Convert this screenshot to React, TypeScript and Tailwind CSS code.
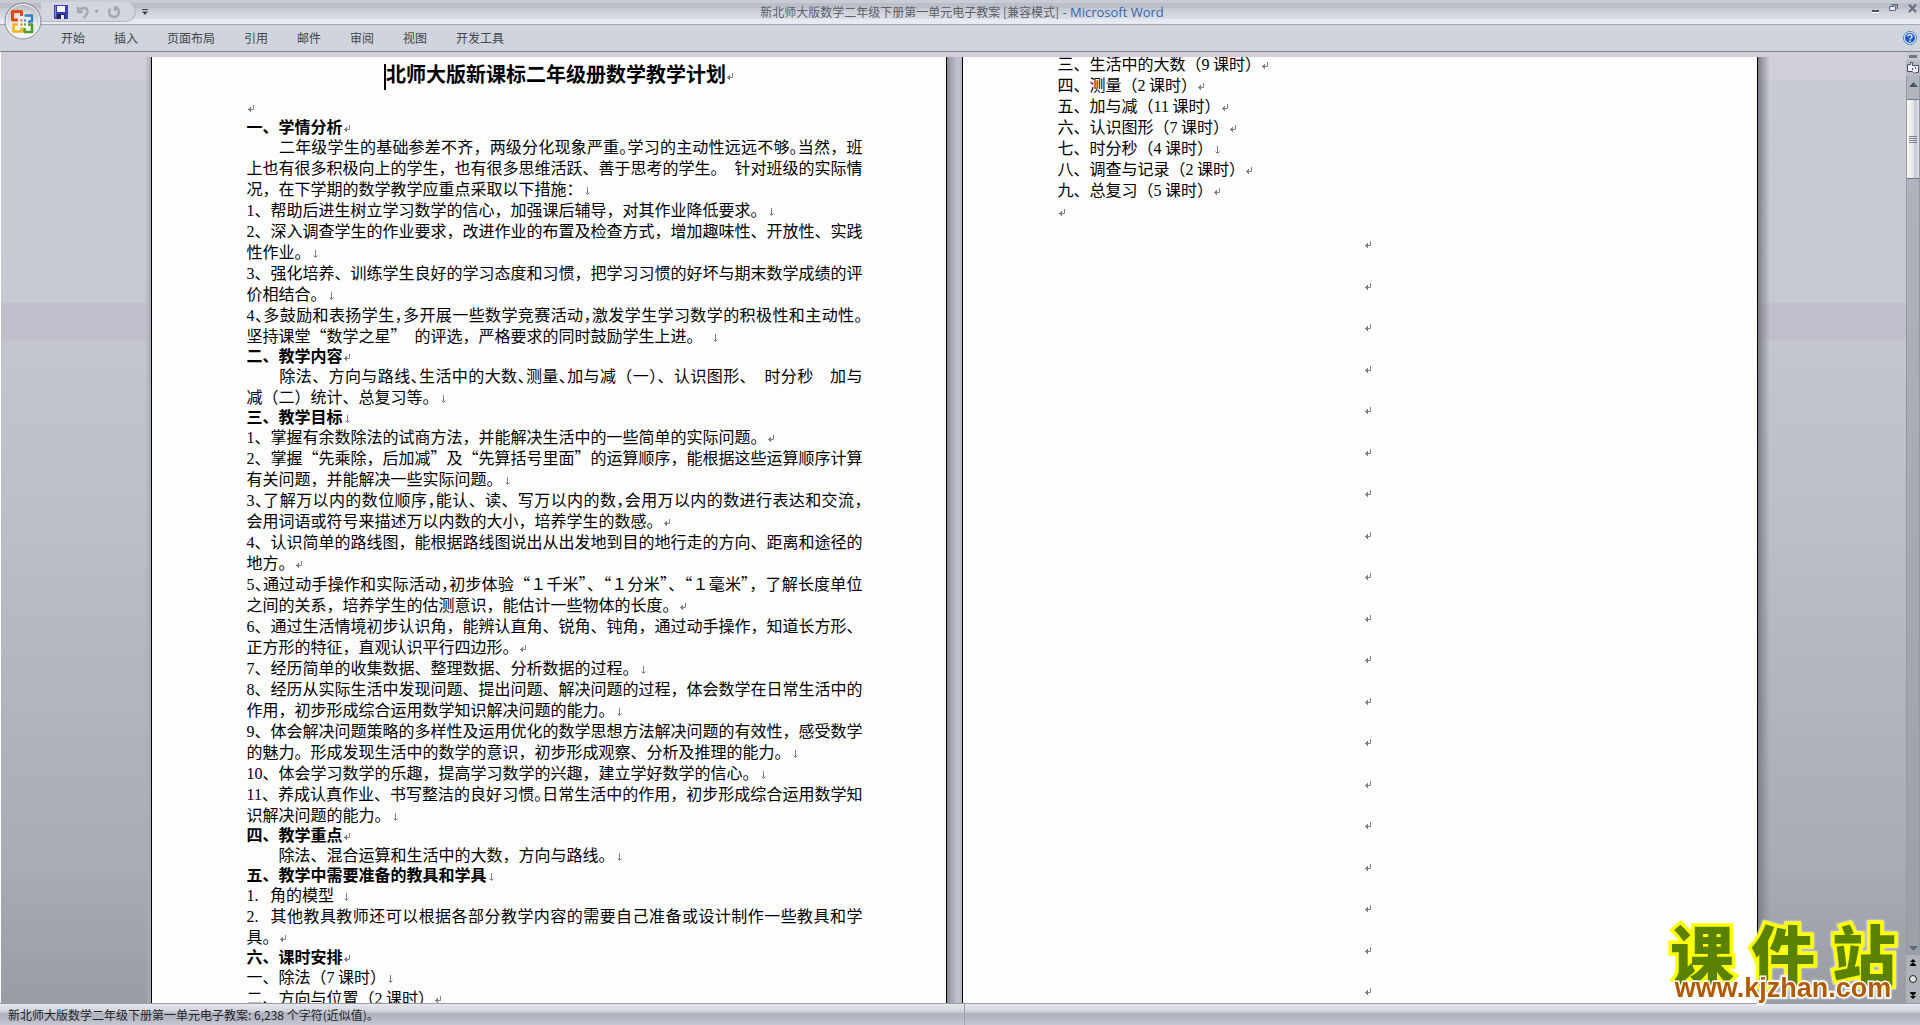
import { Fragment } from "react";

type Mark = "return" | "break";

interface Line {
  text: string;
  mark?: Mark;
  heading?: boolean;
  fill?: boolean;
}

const tabs = ["开始", "插入", "页面布局", "引用", "邮件", "审阅", "视图", "开发工具"];

// "^" before a punctuation mark sets it half width
const leftLines: Line[] = [
  { text: "一、学情分析", mark: "return", heading: true },
  { text: "　　二年级学生的基础参差不齐，两级分化现象严重^。学习的主动性远远不够^。当然，班", fill: true },
  { text: "上也有很多积极向上的学生，也有很多思维活跃、善于思考的学生。\u2002针对班级的实际情", fill: true },
  { text: "况，在下学期的数学教学应重点采取以下措施：", mark: "break" },
  { text: "1、帮助后进生树立学习数学的信心，加强课后辅导，对其作业降低要求。", mark: "break" },
  { text: "2、深入调查学生的作业要求，改进作业的布置及检查方式，增加趣味性、开放性、实践", fill: true },
  { text: "性作业。", mark: "break" },
  { text: "3、强化培养、训练学生良好的学习态度和习惯，把学习习惯的好坏与期末数学成绩的评", fill: true },
  { text: "价相结合。", mark: "break" },
  { text: "4^、多鼓励和表扬学生^，多开展一些数学竞赛活动^，激发学生学习数学的积极性和主动性^。", fill: true },
  { text: "坚持课堂“数学之星”\u2002的评选，严格要求的同时鼓励学生上进。\u2002", mark: "break" },
  { text: "二、教学内容", mark: "return", heading: true },
  { text: "　　除法、方向与路线^、生活中的大数^、测量^、加与减（一）、认识图形、\u2002时分秒　加与", fill: true },
  { text: "减（二）统计、总复习等。", mark: "break" },
  { text: "三、教学目标", mark: "break", heading: true },
  { text: "1、掌握有余数除法的试商方法，并能解决生活中的一些简单的实际问题。", mark: "return" },
  { text: "2、掌握“先乘除，后加减”及“先算括号里面”的运算顺序，能根据这些运算顺序计算", fill: true },
  { text: "有关问题，并能解决一些实际问题。", mark: "break" },
  { text: "3^、了解万以内的数位顺序^，能认、读、写万以内的数^，会用万以内的数进行表达和交流^，", fill: true },
  { text: "会用词语或符号来描述万以内数的大小，培养学生的数感。", mark: "return" },
  { text: "4、认识简单的路线图，能根据路线图说出从出发地到目的地行走的方向、距离和途径的", fill: true },
  { text: "地方。", mark: "return" },
  { text: "5^、通过动手操作和实际活动^，初步体验“１千米”、“１分米”、“１毫米”，了解长度单位", fill: true },
  { text: "之间的关系，培养学生的估测意识，能估计一些物体的长度。", mark: "return" },
  { text: "6、通过生活情境初步认识角，能辨认直角、锐角、钝角，通过动手操作，知道长方形、", fill: true },
  { text: "正方形的特征，直观认识平行四边形。", mark: "return" },
  { text: "7、经历简单的收集数据、整理数据、分析数据的过程。", mark: "break" },
  { text: "8、经历从实际生活中发现问题、提出问题、解决问题的过程，体会数学在日常生活中的", fill: true },
  { text: "作用，初步形成综合运用数学知识解决问题的能力。", mark: "break" },
  { text: "9、体会解决问题策略的多样性及运用优化的数学思想方法解决问题的有效性，感受数学", fill: true },
  { text: "的魅力。形成发现生活中的数学的意识，初步形成观察、分析及推理的能力。", mark: "break" },
  { text: "10、体会学习数学的乐趣，提高学习数学的兴趣，建立学好数学的信心。", mark: "break" },
  { text: "11、养成认真作业、书写整洁的良好习惯^。日常生活中的作用，初步形成综合运用数学知", fill: true },
  { text: "识解决问题的能力。", mark: "break" },
  { text: "四、教学重点", mark: "return", heading: true },
  { text: "　　除法、混合运算和生活中的大数，方向与路线。", mark: "break" },
  { text: "五、教学中需要准备的教具和学具", mark: "break", heading: true },
  { text: "1.\u2002 角的模型\u2002", mark: "break" },
  { text: "2.\u2002 其他教具教师还可以根据各部分教学内容的需要自己准备或设计制作一些教具和学", fill: true },
  { text: "具。", mark: "return" },
  { text: "六、课时安排", mark: "return", heading: true },
  { text: "一、除法（7 课时）", mark: "break" },
  { text: "二、方向与位置（2 课时）", mark: "return" },
];

const rightLines: Line[] = [
  { text: "三、生活中的大数（9 课时）", mark: "return" },
  { text: "四、测量（2 课时）", mark: "return" },
  { text: "五、加与减（11 课时）", mark: "return" },
  { text: "六、认识图形（7 课时）", mark: "return" },
  { text: "七、时分秒（4 课时）", mark: "break" },
  { text: "八、调查与记录（2 课时）", mark: "return" },
  { text: "九、总复习（5 课时）", mark: "return" },
  { text: "", mark: "return" },
];

function ParagraphMark({ mark }: { mark: Mark }) {
  if (mark === "break") {
    return (
      <svg viewBox="0 0 5 8" className="ml-0.5 inline-block h-2 w-[5px] align-middle" fill="none" stroke="#808080">
        <path d="M2.5 0v7M.5 5.500l2 2 2-2" />
      </svg>
    );
  }
  return (
    <svg viewBox="0 0 7 7" className="inline-block h-[7px] w-[7px] align-middle" fill="none" stroke="#808080">
      <path d="M6.5 0v4.5H1M3.5 2v5M2.5 3v3M1.5 4v1" />
    </svg>
  );
}

function Runs({ text }: { text: string }) {
  return (
    <>
      {text.split(/(\^.|[0-9.]+)/).map((part, i) => {
        if (part.startsWith("^")) {
          return (
            <span key={i} className="[font-feature-settings:'halt']">
              {part.slice(1)}
            </span>
          );
        }
        if (/^[0-9.]+$/.test(part)) {
          return (
            <span key={i} className="font-['Liberation_Serif',serif]">
              {part}
            </span>
          );
        }
        return <Fragment key={i}>{part}</Fragment>;
      })}
    </>
  );
}

function TextLine({ line }: { line: Line }) {
  if (line.heading) {
    return (
      <h2 className="h-[19px] text-base leading-[19px] font-bold whitespace-nowrap">
        <Runs text={line.text} />
        {line.mark && <ParagraphMark mark={line.mark} />}
      </h2>
    );
  }
  return (
    <p
      className={
        line.fill
          ? "h-[21px] leading-[21px] [text-align-last:justify]"
          : "h-[21px] leading-[21px] whitespace-nowrap"
      }
    >
      <Runs text={line.text} />
      {line.mark && <ParagraphMark mark={line.mark} />}
    </p>
  );
}

function OfficeButton() {
  return (
    <button aria-label="Office 按钮" className="absolute top-0.5 left-1 z-10 h-[38px] w-[38px]">
      <svg viewBox="0 0 38 38" className="h-full w-full" fill="none">
        <defs>
          <radialGradient id="orb" cx="50%" cy="75%" r="75%">
            <stop offset="0" stopColor="#ffffff" />
            <stop offset=".55" stopColor="#e4e6ea" />
            <stop offset="1" stopColor="#a9adb5" />
          </radialGradient>
        </defs>
        <circle cx="19" cy="19" r="18" fill="url(#orb)" stroke="#8b8f98" />
        <circle cx="19" cy="19" r="16.5" stroke="#f6f7f9" />
        <path d="M14 18H8.500V9.500h9V14" stroke="#e04a12" strokeWidth="3" strokeLinejoin="round" />
        <path d="M20.500 13.500h7.500v6h-4" stroke="#2f7fc4" strokeWidth="2.400" strokeLinejoin="round" />
        <path d="M14 22.500h-4.500v7h8v-4" stroke="#f5b21a" strokeWidth="2.600" strokeLinejoin="round" />
        <path d="M24 22.500h4v7.500h-7.500v-4" stroke="#4f9e24" strokeWidth="2.600" strokeLinejoin="round" />
        <path d="M16.500 18.500h2M16.500 22.500h2" stroke="#d9681c" strokeWidth="2" />
        <path d="M20 18.500h2" stroke="#2f7fc4" strokeWidth="2" />
        <path d="M20 22.500h2" stroke="#4f9e24" strokeWidth="2" />
      </svg>
    </button>
  );
}

function QuickAccess() {
  return (
    <div className="flex items-center">
      <div className="flex h-5 w-[95px] items-center rounded-r-full border-r border-b border-[#b4b8c2] bg-[#d3d6de] pl-[13px]">
        <button aria-label="保存">
          <svg viewBox="0 0 14 14" className="h-3.5 w-3.5">
            <path d="M0 0h14v14H1l-1-1z" fill="#3b3fb4" />
            <path d="M3 1h8v6H3z" fill="#f2f4fb" />
            <path d="M3 9h8v5H3z" fill="#22265e" />
            <path d="M7 10h3v4H7z" fill="#e8eaf6" />
            <path d="M1 1h1v11H1z" fill="#7d86e0" />
          </svg>
        </button>
        <button aria-label="撤消" className="ml-2">
          <svg viewBox="0 0 14 14" className="h-3.5 w-3.5" fill="none" stroke="#a4a8b2" strokeWidth="2.400">
            <path d="M2 2v5h5M2.500 6.500C5 2.500 11 1.500 11.500 6c.2 3-2 5-4 7" />
          </svg>
        </button>
        <button aria-label="撤消选项" className="ml-1">
          <svg viewBox="0 0 5 3" className="h-[3px] w-[5px]" fill="#9a9ea8">
            <path d="M0 0h5L2.500 3z" />
          </svg>
        </button>
        <button aria-label="重复" className="ml-2">
          <svg viewBox="0 0 14 14" className="h-3.5 w-3.5" fill="none" stroke="#a4a8b2" strokeWidth="2.400">
            <path d="M3.500 3.500C1 6 2 12 7 12s6-5.500 3.500-8.500M7 3h4.500M8 1v5" />
          </svg>
        </button>
      </div>
      <button aria-label="自定义快速访问工具栏" className="ml-1.5">
        <svg viewBox="0 0 6 6" className="h-1.5 w-1.5" fill="#3f434c">
          <path d="M0 0h6v1H0zM0 2.500h6L3 6z" />
        </svg>
      </button>
    </div>
  );
}

function WindowButtons() {
  return (
    <div className="flex items-start gap-2.5 pt-1 pr-[3px]">
      <button aria-label="最小化">
        <svg viewBox="0 0 7 10" className="h-2.5 w-[7px]">
          <path d="M0 6h7v2H0z" fill="#4c505a" />
          <path d="M0 8h7v1H0z" fill="#fff" />
        </svg>
      </button>
      <button aria-label="还原">
        <svg viewBox="0 0 9 8" className="h-2 w-[9px]" fill="none" stroke="#5e6a82">
          <path d="M2 .5h6.500V5" strokeWidth="1.500" />
          <path d="M.5 2.500h6v4h-6z" fill="#e8ebf2" />
        </svg>
      </button>
      <button aria-label="关闭">
        <svg viewBox="0 0 9 9" className="h-[9px] w-[9px]" fill="none" stroke="#667084" strokeWidth="2.200">
          <path d="M1 .5l7 7.500M8 .5L1 8" />
        </svg>
      </button>
    </div>
  );
}

function ScrollColumn() {
  return (
    <div className="flex w-3.5 shrink-0 flex-col items-center bg-[#c8cbd3]">
      <div className="mt-[3px] h-[3px] w-2 shrink-0 bg-[#72767e]" />
      <button aria-label="标尺" className="mt-0.5 flex h-4 w-full shrink-0 items-center justify-center bg-[#b7bcc4]">
        <svg viewBox="0 0 12 12" className="h-3 w-3" fill="#f1eef6" stroke="#3f5068">
          <path d="M.5 2.500h3v-2h2v3h6v7h-3l-1 1-2-2h-5z" />
          <path d="M5.500 6v2M8.500 5v2" />
        </svg>
      </button>
      <div className="flex w-full flex-1 flex-col items-center border-x border-[#9498a1] bg-[linear-gradient(#b1b5be,#9b9fa8)]">
        <button aria-label="向上滚动" className="flex h-[23px] items-start pt-1.5">
          <svg viewBox="0 0 9 5" className="h-[5px] w-[9px]" fill="#4a5468">
            <path d="M4.500 0L9 5H0z" />
          </svg>
        </button>
        <div className="flex h-20 w-full flex-col items-center justify-center gap-px border-y border-[#72767e] bg-[linear-gradient(90deg,#fdf8ee,#e8eaf0_45%,#c4c7d2_70%,#e2e4ea)]">
          <i className="h-px w-2 bg-[#7e828c]" />
          <i className="h-px w-2 bg-[#7e828c]" />
          <i className="h-px w-2 bg-[#7e828c]" />
          <i className="h-px w-2 bg-[#7e828c]" />
        </div>
        <button aria-label="向下滚动" className="mt-auto pb-1">
          <svg viewBox="0 0 9 5" className="h-[5px] w-[9px]" fill="#5c6880">
            <path d="M0 0h9L4.500 5z" />
          </svg>
        </button>
      </div>
      <div className="flex h-12 w-full shrink-0 flex-col items-center justify-between bg-[#b0b2ba] pt-1 pb-1">
        <button aria-label="前一页">
          <svg viewBox="0 0 6 7" className="h-[7px] w-1.5">
            <path d="M3 0l3 3H0zM3 3l3 3H0zM0 6h6v1H0z" />
          </svg>
        </button>
        <button aria-label="选择浏览对象">
          <svg viewBox="0 0 8 8" className="h-2 w-2">
            <circle cx="4" cy="4" r="3.500" fill="#dfe0e2" stroke="#222" />
          </svg>
        </button>
        <button aria-label="下一页">
          <svg viewBox="0 0 6 7" className="h-[7px] w-1.5">
            <path d="M0 0h6v1H0zM0 1h6L3 4zM0 4h6L3 7z" />
          </svg>
        </button>
      </div>
    </div>
  );
}

export default function App() {
  return (
    <div
      lang="zh-CN"
      className="relative flex h-screen flex-col overflow-hidden bg-[#d0d4dc] font-['Noto_Sans_CJK_SC',sans-serif] text-black"
    >
      <header className="shrink-0">
        <OfficeButton />
        <div className="grid h-[25px] grid-cols-[1fr_auto_1fr] items-start border-b border-[#a3a7b0] bg-[linear-gradient(#c8ccd6_3px,#bbbfc8_3px,#bbbfc8_8px,#c3c7d0_8px,#cdd1d9_12px,#d6d9df_16px,#dadde2_19px,#e6eaf2_19px)]">
          <div className="pt-0.5 pl-[41px]">
            <QuickAccess />
          </div>
          <h1 className="pl-1 text-xs leading-6 text-[#5c606a]">
            新北师大版数学二年级下册第一单元电子教案 [兼容模式]
            <span className="font-['Open_Sans',sans-serif] text-[13px] text-[#3566a8]">{" -  Microsoft Word"}</span>
          </h1>
          <div className="justify-self-end">
            <WindowButtons />
          </div>
        </div>
        <nav className="flex h-[27px] items-center gap-[29px] border-b border-[#7c8488] pr-[3px] pl-[61px] text-xs text-[#40444e]">
          {tabs.map((tab) => (
            <button key={tab}>{tab}</button>
          ))}
          <button aria-label="帮助" className="ml-auto">
            <svg viewBox="0 0 14 14" className="h-3.5 w-3.5">
              <circle cx="7" cy="7" r="6.500" fill="#e6eefb" stroke="#4e7fc4" />
              <circle cx="7" cy="7" r="5" fill="#1f55c8" />
              <path d="M5 5.500c0-2.500 4-2.500 4 0 0 1.500-2 1.500-2 3M7 9.500V11" fill="none" stroke="#fff" strokeWidth="1.400" />
            </svg>
          </button>
        </nav>
      </header>

      <main className="flex min-h-0 flex-1">
        <div className="flex min-w-0 flex-1 justify-center overflow-hidden border-l border-white bg-[linear-gradient(#d1ceda_28px,#c8cbd3_28px,#c6c9d1_251px,#c2bfcd_251px,#c1becc_287px,#c3c6ce_287px,#bbbec7_50%,#a9acb5_85%,#999ca5)] pt-[5px] pl-px">
          <div className="-ml-1.5 w-1.5 shrink-0 bg-linear-to-r from-transparent to-[#a9acb8]" />
          <article className="w-[796px] shrink-0 overflow-hidden border-x border-black bg-[#fdfdfd] pr-[83px] pl-[95px]">
            <h1 className="mb-[5px] h-[34px] pl-2 text-center text-xl leading-[34px] font-bold whitespace-nowrap">
              <span className="inline-block h-[26px] w-0.5 bg-black align-middle" />
              北师大版新课标二年级册数学教学计划
              <ParagraphMark mark="return" />
            </h1>
            <TextLine line={{ text: "", mark: "return" }} />
            {leftLines.map((line, i) => (
              <TextLine key={i} line={line} />
            ))}
          </article>
          <div className="w-[15px] shrink-0 bg-[linear-gradient(90deg,#85888f,#a6a9b4_30%,#c0c3d0_70%,#b4b7c4)]" />
          <article className="w-[796px] shrink-0 overflow-hidden border-x border-black bg-[#fdfdfd] pr-[83px] pl-[95px]">
            <div className="-mt-1 mb-[3px]">
              {rightLines.map((line, i) => (
                <TextLine key={i} line={line} />
              ))}
            </div>
            {Array.from({ length: 19 }, (_, i) => (
              <p key={i} className="flex h-[42px] items-center justify-center pl-1 even:h-[41px]">
                <ParagraphMark mark="return" />
              </p>
            ))}
          </article>
          <div className="-mr-3 w-3 shrink-0 bg-linear-to-r from-[#7c7f86] to-transparent" />
        </div>
        <ScrollColumn />
      </main>

      <footer className="flex h-[22px] shrink-0 items-center border-t border-[#9a9da6] bg-[linear-gradient(#e6e8ee,#d0d3db_35%,#b0b3bd_45%,#b6b9c3_70%,#c6c9d4)] text-xs text-[#22252c]">
        <p className="flex-1 pl-2 leading-5">新北师大版数学二年级下册第一单元电子教案: 6,238 个字符(近似值)。</p>
        <div className="flex-1 self-stretch border-l border-[#a0a3ae]" />
      </footer>

      <div className="absolute right-[22px] bottom-[23px] flex w-[230px] flex-col items-center drop-shadow-[0_0_1px_#fff]">
        <div className="flex w-full justify-between px-0.5 text-[64px] leading-[46px] font-black text-[#5a8200] [-webkit-text-stroke:7px_#ffff00] [paint-order:stroke_fill]">
          <span>课</span>
          <span>件</span>
          <span>站</span>
        </div>
        <a
          href="#"
          className="relative font-['Liberation_Sans',sans-serif] text-[27px] leading-7 font-bold text-[#b25a00] [-webkit-text-stroke:3px_#ffffff] [paint-order:stroke_fill]"
        >
          www.kjzhan.com
        </a>
      </div>
    </div>
  );
}
